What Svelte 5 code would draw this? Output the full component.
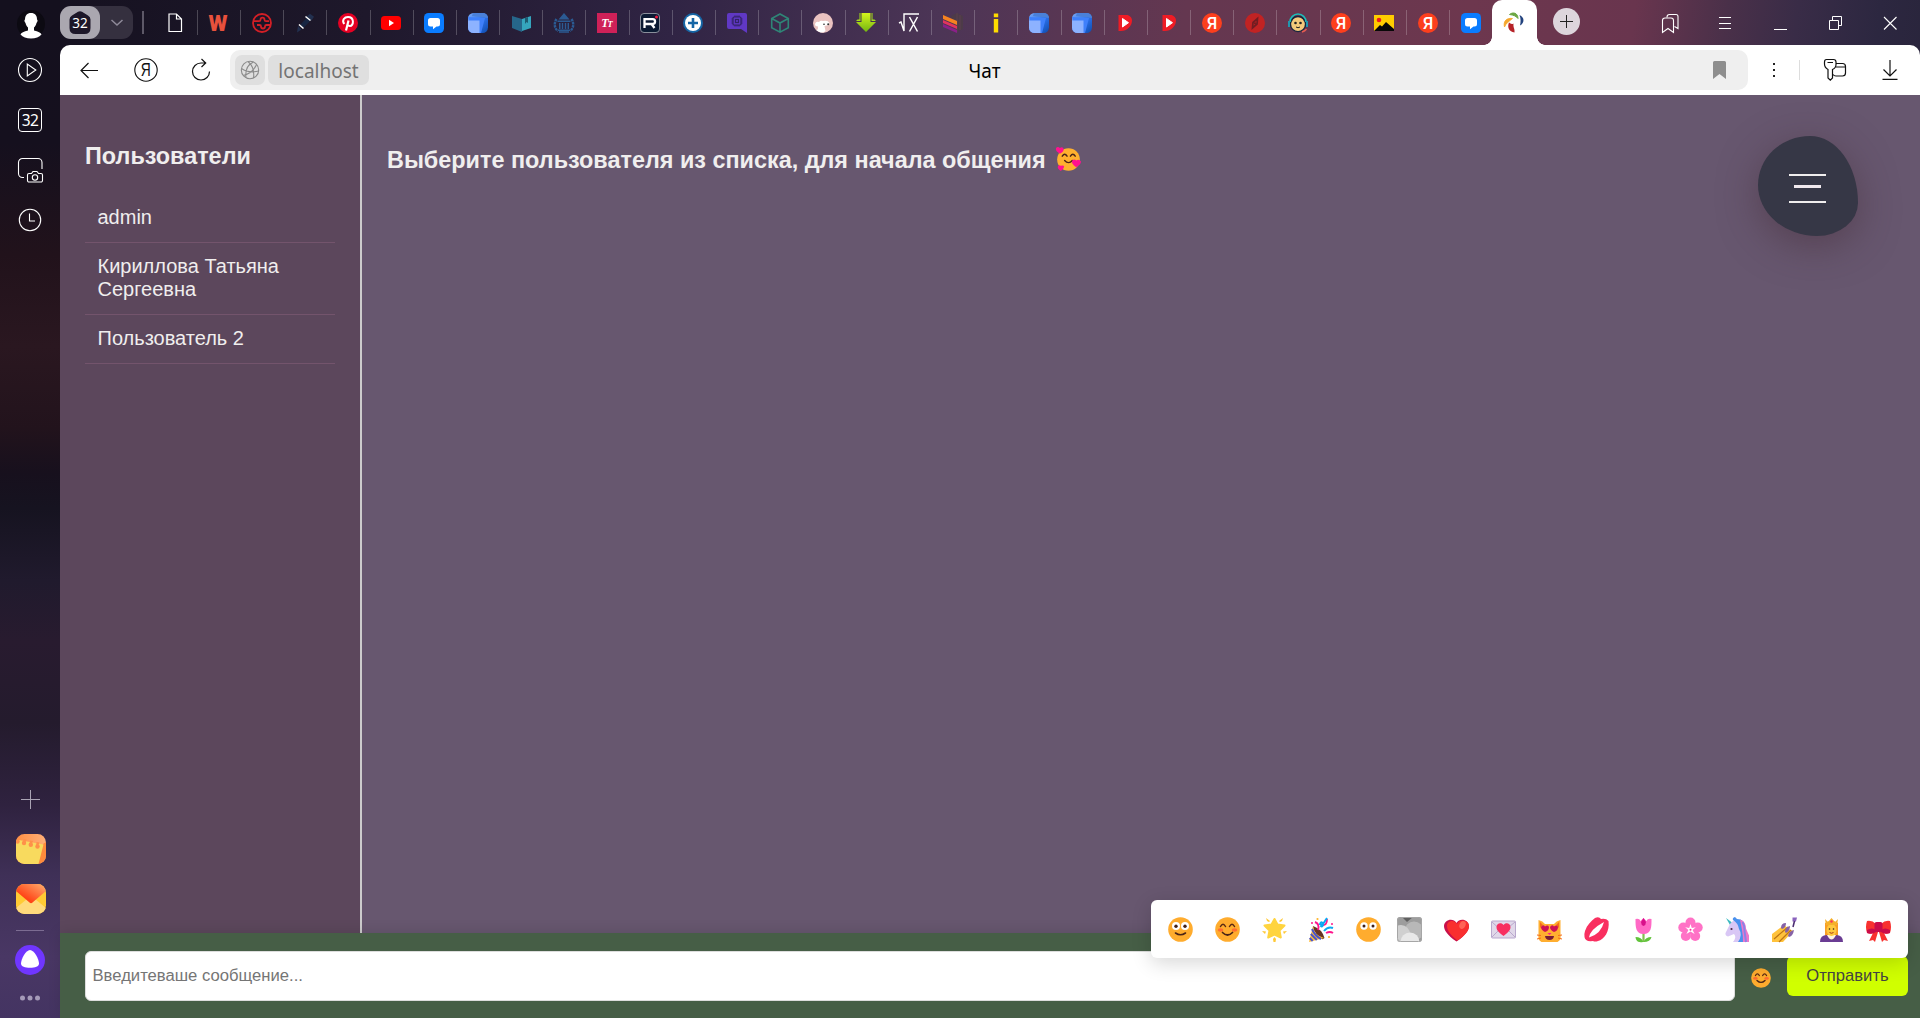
<script>
  const blueCard = `<defs><linearGradient id="bc" x1="0" y1="0" x2="1" y2="1"><stop offset="0" stop-color="#7aa9f2"/><stop offset=".5" stop-color="#2f74f0"/><stop offset="1" stop-color="#0d4bab"/></linearGradient></defs><rect width="20" height="20" rx="5.5" fill="url(#bc)"/><path d="M5 0h10a5 5 0 0 1 5 5L4 3z" fill="#4a80d8"/><path d="M0 4l17 1-4 15H5z" fill="#3f80fb"/><path d="M0 7.5h11.5V20H5.5A5.5 5.5 0 0 1 0 14.500z" fill="#8db2ff"/>`;
  const yandex = `<circle cx="10" cy="10" r="10" fill="#fc3f1d"/><text x="10" y="15.600" text-anchor="middle" font-family="Liberation Sans" font-weight="700" font-size="16" textLength="10" lengthAdjust="spacingAndGlyphs" fill="#fff">Я</text>`;
  const chat = `<rect width="20" height="20" rx="4.500" fill="#0a7cff"/><path d="M6.500 5h7a2.500 2.500 0 0 1 2.500 2.500v3.500a2.500 2.500 0 0 1-2.500 2.500h-1L9 16.200v-2.700H6.500A2.500 2.500 0 0 1 4 11V7.500A2.500 2.500 0 0 1 6.500 5z" fill="#fff"/>`;
  const redPlay = `<path d="M3.500 2h8c3 0 5.500 2.500 5.500 5.500C17 13 12 18 6 18H3.500z" fill="#ee1c25"/><path d="M7.500 5.500l6 4.200-6 4.300z" fill="#fff" stroke="#fff" stroke-linejoin="round"/>`;

  const tabs = [
    `<path d="M4 1h7.500l5 5v12.500H4zM11.500 1v5h5" fill="none" stroke="#fff" stroke-width="1.200"/>`,
    `<text x="10" y="18" text-anchor="middle" font-family="Roboto" font-weight="900" font-size="22.500" textLength="19" lengthAdjust="spacingAndGlyphs" fill="#e8513c">W</text>`,
    `<circle cx="10" cy="10" r="9" fill="none" stroke="#d41f26" stroke-width="1.800"/><g fill="none" stroke="#d41f26" stroke-width="1.800"><path d="M2 8.200h5q1.500 0 1.500-1.500 0-2 2-2t2 2q0 1.500 1.500 1.500h3"/><path d="M18 12h-3.500q-1.500 0-1.500 1.500 0 2-2 2t-2-2q0-1.500-1.500-1.500H5"/></g>`,
    `<path d="M11.500 3.500L15 .8l4 3-2.500 3.700zM3 13l3.500 3.500L2 19.500z" fill="#22304f"/><path d="M5 12l7-7.500 3.500 3L8.500 15z" fill="#172542"/><path d="M10.500 3.500l5 4M4 11.500l4.500 4" stroke="#fff" stroke-width="1.500"/>`,
    `<circle cx="10" cy="10" r="10" fill="#e60023"/><path d="M8 17.500l2.500-10" stroke="#fff" stroke-width="2.200" fill="none"/><path d="M6.200 11C3.500 7 6.500 4 10 4c6.500 0 6 9 1.800 9-1 0-1.800-.5-2-1.200" stroke="#fff" stroke-width="2" fill="none"/>`,
    `<rect y="3" width="20" height="14" rx="3.500" fill="#f00"/><path d="M8 6.800v6.400l5-3.200z" fill="#fff"/>`,
    chat,
    blueCard,
    `<path d="M1 3l10 3v13L1 15z" fill="#26668a"/><path d="M11 6l9-3v12l-9 3z" fill="#35a5bd"/><path d="M14 5l3-1v6l-1.500-1-1.500 2z" fill="#1d5c72"/>`,
    `<path d="M10 0l5.500 6.500h-11zM3.500 7.500h13V9h-13zM5 10h1.500v6H5zm2.800 0h1.400v6H7.800zm3 0h1.400v6h-1.400zm2.800 0H15v6h-1.400zM4 16.500h12V18H4z" fill="#2b5a92"/><path d="M2.500 6C0 10 0 15 4 18M17.500 6c2.500 4 2.500 9-1.500 12" fill="none" stroke="#2b5a92" stroke-width="2.400" stroke-dasharray="2.500 .7"/><path d="M5 19h10" stroke="#2b5a92" stroke-width="1.500"/>`,
    `<rect width="20" height="20" fill="#cf2158"/><text x="10" y="13.500" text-anchor="middle" font-family="Liberation Serif" font-style="italic" font-weight="700" font-size="12" fill="#fff">T<tspan font-size="8.500" dx="-1">T</tspan></text>`,
    `<rect x=".5" y=".5" width="19" height="19" rx="3.500" fill="#0b1a33" stroke="#8a8f9b"/><path d="M4.500 15V6.200h8.300c3 0 3 4.800 0 4.800H5M11.500 11l3 4" fill="none" stroke="#fff" stroke-width="2.300"/><circle cx="16.500" cy="4" r="1.500" fill="#f21a3f"/>`,
    `<circle cx="10" cy="10" r="10" fill="#1565a5"/><circle cx="10" cy="10" r="8" fill="#fff"/><path d="M10 5v10M5 10h10" stroke="#1565a5" stroke-width="2.600"/>`,
    `<path d="M2 0h16a2 2 0 0 1 2 2v18l-6-4H2a2 2 0 0 1-2-2V2a2 2 0 0 1 2-2z" fill="#6038c4"/><g fill="none" stroke="#322268" stroke-width="1.200"><rect x="6" y="4" width="8" height="8" rx="1"/><rect x="8.500" y="6.500" width="3" height="3"/><path d="M8 2.500V4m2-1.500V4m2-1.500V4m-4 8v1.500m2-1.500v1.500m2-1.500v1.500M4.500 6H6m-1.500 2H6m-1.500 2H6m8-4h1.500M14 8h1.500M14 10h1.500"/></g>`,
    `<path d="M10 1l8.300 4.500v9.200L10 19.200l-8.300-4.500V5.500zM1.700 5.500L10 10l8.300-4.500M10 10v9" fill="none" stroke="#2f8577" stroke-width="1.600"/>`,
    `<circle cx="10" cy="10" r="10" fill="#e9c2c0"/><path d="M2 11q1-3 4-2 1.500-2 4-1 5-1 6.500 2l-1 2-4 1 1 5q-2 2-5 1.500l-4-2q2-2 1.500-4-3 0-3-2.500z" fill="#fff"/><circle cx="11" cy="11.300" r=".8" fill="#222"/><circle cx="15.200" cy="11.300" r="1" fill="#333"/>`,
    `<defs><linearGradient id="dg" x1="0" y1="0" x2="0" y2="1"><stop offset="0" stop-color="#d5f51c"/><stop offset="1" stop-color="#72b512"/></linearGradient></defs><path d="M5.500 0h9v9H20L10 19 0 9h5.500z" fill="url(#dg)"/><path d="M3.500 0h1v8H0l1.500-1.500h2zM16.500 0h-1v8H20l-1.500-1.500h-2z" fill="#a6df18"/>`,
    `<path d="M0 10l2-1 3 9V1h15" fill="none" stroke="#fff" stroke-width="1.400"/><path d="M10.500 4l8 14.500M18.500 4l-8 14.500" stroke="#fff" stroke-width="1.500"/>`,
    `<path d="M8 3l6-3 6 3v13l-6 3z" fill="#4d3b48"/><path d="M14 0v19M17 2v15" stroke="#5d414f"/><path d="M0 2l14 6v4L0 6z" fill="#f78220"/><path d="M0 7l14 6v3L0 10z" fill="#e2335f"/><path d="M0 11l14 6v3L0 14z" fill="#8b2089"/>`,
    `<path d="M7.800.500h4.400v3.800H7.800zM7.800 6h4.400v13.500H7.800z" fill="#ffdc00"/>`,
    blueCard, blueCard, redPlay, redPlay, yandex,
    `<circle cx="10" cy="10" r="10" fill="#c12323"/><path d="M7.500 15l.5-5.500 4.500-4-.5 5.500z" fill="none" stroke="#701d22" stroke-width="1.700"/><circle cx="10" cy="10.200" r="1" fill="#701d22"/>`,
    `<circle cx="10" cy="11" r="8.300" fill="#18263f"/><circle cx="10" cy="11" r="6.900" fill="#f5ca7b"/><path d="M2 9a8 8 0 0 1 16 0" fill="none" stroke="#19c0bb" stroke-width="1.600"/><path d="M3.300 8.500a7 7 0 0 1 13.400 0" stroke="#18263f" stroke-width="1.200" fill="none"/><path d="M1 8v6M19 8v6" stroke="#2196b0" stroke-width="2"/><circle cx="7.500" cy="10" r="1.300" fill="#222"/><circle cx="12.500" cy="10" r="1.300" fill="#222"/><path d="M8 14q2 1.500 4 0" stroke="#222" fill="none"/><path d="M14 19q3-1 4.500-3" stroke="#e65b50" stroke-width="1.500" fill="none"/>`,
    yandex,
    `<path d="M0 2h20v16H0z" fill="#ffcc00"/><circle cx="5" cy="7" r="2.300" fill="#f01c1c"/><path d="M0 18l6-6 2 1.500 4-4.500 8 7v2z" fill="#080808"/>`,
    yandex,
    chat,
    `<path d="M5.500 1.500C9-1.500 14 0 14 5.500 12 3 9.500 2 5.500 1.500z" fill="#6ca744" stroke="#6ca744"/><path d="M15.500 2c5 2 5.500 8 .5 10.500.8-3 1-7-.5-10.500z" fill="#22427e"/><path d="M8.500 5.500C2 4.500-1 9 .5 14 2 10 5 8.500 8.500 5.500z" fill="#f5a72d" stroke="#f5a72d" stroke-width=".8"/><path d="M5 9.500c-2 4.500 0 9.500 5.500 10 .5-4-1.500-4.500-1-9-1.500 1-3 .5-4.500-1z" fill="#b62328"/>`
  ];

  const smile = `<circle cx="12.500" cy="12.500" r="12.300" fill="#ffac2e"/><path d="M5.500 9.500q2.500-4.500 5 0M14.500 9.500q2.500-4.500 5 0" fill="none" stroke="#5b2a14" stroke-width="1.500" stroke-linecap="round"/><ellipse cx="5.500" cy="13" rx="2.800" ry="1.700" fill="#ff6d32"/><ellipse cx="19.500" cy="13" rx="2.800" ry="1.700" fill="#ff6d32"/><path d="M7.500 15.500q5 5 10 0" fill="none" stroke="#4b2417" stroke-width="1.700" stroke-linecap="round"/>`;

  const emojis = [
    { name: 'wide eyes', art: `<circle cx="12.500" cy="12.500" r="12.300" fill="#ffac2e"/><circle cx="8" cy="9" r="4" fill="#fff"/><circle cx="17" cy="9" r="4" fill="#fff"/><circle cx="8" cy="9.200" r="1.700" fill="#402019"/><circle cx="17" cy="9.200" r="1.700" fill="#402019"/><path d="M7.500 16q5 3.500 10 0" fill="none" stroke="#4b2417" stroke-width="1.600" stroke-linecap="round"/>` },
    { name: 'smile', art: smile },
    { name: 'star', art: `<path d="M12.500 2l3 5.500 7 1-5 5 1.300 7-6.300-3-6.300 3 1.300-7-5-5 7-1z" fill="#ffd43f" stroke="#ffd43f" stroke-width="2" stroke-linejoin="round"/><path d="M4 1l4 3-1 1-2-1zm17 0l-4 3 1 1 2-1zM0 14l4 .5-1 2.500zm25 0l-4 .5 1 2.500zM11 22l1.500-2 1.500 2-.5 3h-2z" fill="#ffc936"/>` },
    { name: 'party', art: `<path d="M4 9Q13 12 15.500 21 13 24 9 19 4 14 4 9z" fill="#653525"/><path d="M4 9q1 9 11 12L0 25z" fill="#ffbd39"/><path d="M3 12q3 7 9 10M1.800 17q3 3 6 6M.700 21l3 3" fill="none" stroke="#4c55c8" stroke-width="2"/><path d="M9 13q2-6-3-8M17 16q4-2 7 0M13 8q5 1 5-6" fill="none" stroke="#ff168d" stroke-width="1.900"/><path d="M11 8c0-4 4-3 3 0s-4 1 0-1l4-6M15 14q4-5 9-3" fill="none" stroke="#0baaf2" stroke-width="2"/><circle cx="8.500" cy="2" r="1.100" fill="#ffb52b"/><circle cx="20" cy="20" r="1.100" fill="#ffb52b"/><circle cx="3" cy="6" r="1" fill="#ff168d"/><circle cx="23" cy="7" r="1" fill="#ff168d"/>` },
    { name: 'no mouth', art: `<circle cx="12.500" cy="12.500" r="12.300" fill="#ffac2e"/><circle cx="8" cy="9" r="3.700" fill="#fff"/><circle cx="17" cy="9" r="3.700" fill="#fff"/><circle cx="8" cy="9" r="1.500" fill="#402019"/><circle cx="17" cy="9" r="1.500" fill="#402019"/>` },
    { name: 'fog', tile: true, art: `<clipPath id="fogc"><rect width="25" height="25" rx="3"/></clipPath><g clip-path="url(#fogc)"><rect width="25" height="25" fill="#9d9d9d"/><path d="M5 0h11l-6 5z" fill="#606060"/><circle cx="17" cy="14" r="9.500" fill="#b8b8b8"/><circle cx="4" cy="17" r="9" fill="#d0d0d0"/><circle cx="13" cy="25" r="9.500" fill="#e8e8e8"/></g><rect x=".5" y=".5" width="24" height="24" rx="3" fill="none" stroke="#a6a6a6"/>` },
    { name: 'heart', art: `<path d="M12.500 24.500C3 18 0 13 0 9c0-6 9-9 12.500-3C16 0 25 3 25 9c0 4-3 9-12.500 15.500z" fill="#c8104a"/><path d="M13.500 23.500C6 18 3 13 3 9c0-5 7-7 10-2 3-6 12-4 12 2 0 4-3 9-11.500 14.500z" fill="#f92f2f"/><ellipse cx="18.500" cy="8" rx="3" ry="4" transform="rotate(25 18.500 8)" fill="#ff6357"/>` },
    { name: 'love letter', art: `<rect x=".5" y="4" width="24" height="17" rx="1" fill="#e0d8e9" stroke="#b9a8cd"/><path d="M1 5l11 10L24 5M1 20l8-8M24 20l-8-8" fill="none" stroke="#b9a8cd"/><path d="M12.500 19C7 15 5.500 12.500 5.500 10c0-4 5-5 7-2 2-3 7-2 7 2 0 2.500-1.500 5-7 9z" fill="#f82f60"/>` },
    { name: 'heart-eyed cat', art: `<path d="M1.500 3Q6 4 8 7h9q2-3 6.500-4v15q1 5-3 7h-16q-4-2-3-7z" fill="#ffae30"/><path d="M3 5l3 3-3 3zM22 5l-3 3 3 3z" fill="#f56c19"/><path d="M8 15q-4-2-4-5 2-3 4-.500 3-2 4 .5 0 4-4 5zM17 15q-4-2-4-5 2-3 4-.500 3-2 4 .5 0 4-4 5z" fill="#cf1053"/><path d="M10.500 16h4l-2 2z" fill="#ff1b90"/><path d="M8 19h9q-.5 4-4.500 4T8 19z" fill="#7b1d35"/><path d="M0 18l4 .5M0 22l4-1M25 18l-4 .5M25 22l-4-1" stroke="#f56c19"/>` },
    { name: 'kiss', art: `<path d="M1 14C3 8 7 4 11 1q4-2 6 1 5-1 7.500 2C26 14 20 23 14 24q-3 1-5 0-8 1-8.500-4-.5-3 .5-6z" fill="#f92f60"/><path d="M5 20.500q1-8 15-15.500-3 12-15 15.500z" fill="#fff"/>` },
    { name: 'tulip', art: `<path d="M12.500 25V15" stroke="#83bf4f" stroke-width="2.200"/><path d="M12 25C6 26 5 23 4.500 20q6 0 8 5 2-5 8-5-1 5-8 5z" fill="#62c33b"/><path d="M4.500 2q4-1 5 2l3-3 3 3q1-3 5-2c0 8 0 15-8 15S4.500 10 4.500 2z" fill="#ff69c5"/><path d="M12.500 1l2.500 4q0 3-2.500 4-2.500-1-2.500-4z" fill="#d8108b"/>` },
    { name: 'blossom', art: `<g fill="#ff72c6"><circle cx="12.500" cy="5.500" r="5"/><circle cx="19.700" cy="10.500" r="5"/><circle cx="17.200" cy="19" r="5"/><circle cx="7.800" cy="19" r="5"/><circle cx="5.300" cy="10.500" r="5"/><circle cx="12.500" cy="12.500" r="5"/></g><path d="M12.500 7l1.300 4 4-.8-3.200 2.800 2 4-4.100-2.500L8.400 17l2-4-3.200-2.800 4 .8z" fill="#fff"/><circle cx="12.500" cy="12.800" r="1" fill="#f92f9b"/>` },
    { name: 'unicorn', art: `<path d="M1 1l6 4.500L5 8z" fill="#39b9c0"/><path d="M5 7q4-5 9-4 6 5 4 22H8q4-5 1-8l-6 2.500q-3-1-2.500-3.500z" fill="#d9c7f5"/><path d="M8 3q-1-2 2-3l2 2q8 0 8 9 0 8 2 14h-9q5-7 1-13-1-6-6-9z" fill="#4a91ee"/><path d="M15 2.500q6 2 6 9l3 7v6.500h-6q0-7-1-12z" fill="#ee77cb"/><path d="M17.500 5q2.500 4 2 9l1.500 11" stroke="#8c82e6" stroke-width="2" fill="none"/><circle cx="6.500" cy="12" r="1.100" fill="#4a2845"/>` },
    { name: 'nail polish', art: `<path d="M0 17L12 8l5 4 4 2-10 11H0z" fill="#ffc23b"/><path d="M2 22l14-12M7 25l12-12" stroke="#be7513" stroke-width="1.200"/><path d="M9 11q0-5 5-5 0 5-4 6zM13 15q0-5 5-6 0 5-4 7zM16 19q1-5 6-6-1 6-5 7z" fill="#8662a6"/><path d="M20.500.500l4.500 0-1 4h-3.500z" fill="#8a63bd"/><path d="M22.500 4l-1.500 6" stroke="#4d2d72" stroke-width="1.500"/>` },
    { name: 'princess', art: `<path d="M6 6q6-4 13 0v15H6z" fill="#f99d25"/><path d="M1 25q0-7 7-7l4.500 4 4.500-4q7 0 7 7z" fill="#6a3c93"/><path d="M8 18q4.500 9 9 0z" fill="#fff3df"/><ellipse cx="12.500" cy="13" rx="5" ry="6" fill="#ffc83d"/><path d="M6 2l3 3 3.500-4L16 5l3-3-1 6H7z" fill="#f5b02a"/><circle cx="12.500" cy="4.500" r="1.200" fill="#f92f60"/><circle cx="10.500" cy="12" r=".8" fill="#37251a"/><circle cx="14.500" cy="12" r=".8" fill="#37251a"/><path d="M10.500 15.500q2 1.500 4 0" stroke="#a8371c" fill="none"/>` },
    { name: 'ribbon', art: `<path d="M8 14L3 24l4-1 2 2 3-10zM17 14l5 10-4-1-2 2-3-10z" fill="#f8312f"/><path d="M1 4q5-1 9 3v8q-4 3-9 1-2-6 0-12zM24 4q-5-1-9 3v8q4 3 9 1 2-6 0-12z" fill="#f8312f"/><path d="M1 13q5-3 9 0v2q-4 3-9 1zM24 13q-5-3-9 0v2q4 3 9 1z" fill="#ca0b4a"/><rect x="8.500" y="5" width="8" height="10" rx="2" fill="#ca0b4a"/>` }
  ];

  const users = ['admin', 'Кириллова Татьяна Сергеевна', 'Пользователь 2'];
  let message = $state('');
</script>

<div class="browser">
  <aside class="rail">
    <div class="slot avatar">
      <svg width="28" height="32" viewBox="0 0 28 32"><circle cx="14" cy="16" r="14" fill="#0c0a12"/><path d="M14 6c4 0 6 2.500 6 6.500 1 .5.600 2.500-.5 3.500-.5 2-1.500 3.500-2.500 4.500v3c4 1 7 2 7.500 4q-3.500 4-10.500 4T3.500 27.500c.5-2 3.500-3 7.500-4v-3c-1-1-2-2.500-2.500-4.500-1.100-1-1.500-3-.500-3.500C8 8.500 10 6 14 6z" transform="translate(0 -1)" fill="#fff"/></svg>
    </div>
    <div class="slot"><svg width="26" height="26" viewBox="0 0 26 26" fill="none" stroke="#fff" stroke-width="1.100"><circle cx="13" cy="13" r="11.500"/><path d="M10.300 7v12l8.500-6z"/></svg></div>
    <div class="slot"><span class="count">32</span></div>
    <div class="slot"><svg width="26" height="26" viewBox="0 0 26 26" fill="none" stroke="#fff" stroke-width="1.100"><path d="M7 20.500H5.500a4 4 0 0 1-4-4v-11a4 4 0 0 1 4-4h15.500a4 4 0 0 1 4 4V12"/><path d="M12 16.500h2.500l1.500-2h4l1.500 2H24a1.500 1.500 0 0 1 1.500 1.500v5.500a1.500 1.500 0 0 1-1.500 1.500H12a1.500 1.500 0 0 1-1.500-1.500V18a1.500 1.500 0 0 1 1.500-1.500z"/><circle cx="18" cy="20.500" r="2.700"/></svg></div>
    <div class="slot"><svg width="26" height="26" viewBox="0 0 26 26" fill="none" stroke="#fff" stroke-width="1.100"><circle cx="13" cy="13" r="10.700"/><path d="M12.500 6.500v7.500H18"/></svg></div>
    <div class="grow"></div>
    <div class="slot"><svg width="20" height="20" viewBox="0 0 20 20" stroke="#aaa4b4"><path d="M10.500 1v19M1 10.500h19"/></svg></div>
    <div class="slot app"><svg width="30" height="30" viewBox="0 0 30 30"><defs><linearGradient id="nt" x1="0" y1="0" x2="1" y2="0"><stop stop-color="#ff8e43"/><stop offset="1" stop-color="#ffb078"/></linearGradient><clipPath id="rc"><rect width="30" height="30" rx="8.500"/></clipPath></defs><g clip-path="url(#rc)"><path d="M0 0h30v30H0z" fill="url(#nt)"/><path d="M27 10l3-2v22h-8z" fill="#ff8b3c"/><path d="M0 5.500L27.500 10.500 22.500 30H0z" fill="#f8da5e"/><g fill="#ff9149"><circle cx="1.500" cy="7.500" r="2.200"/><circle cx="8" cy="9" r="2.200"/><circle cx="14.800" cy="10.800" r="2.200"/><circle cx="21.500" cy="12.500" r="2.200"/><path d="M0 3h3.500L2 8H0zM7.500 5l3 .5L9 9H7zM14 6.500l3 .5-1.500 4h-2zM20.500 8l3 .5-1.500 4h-2z"/></g></g></svg></div>
    <div class="slot app"><svg width="30" height="30" viewBox="0 0 30 30"><defs><linearGradient id="ml" x1="0" y1="1" x2="1" y2="0"><stop offset=".3" stop-color="#ff4517"/><stop offset="1" stop-color="#ffb070"/></linearGradient></defs><g clip-path="url(#rc)"><path d="M0 0h30v30H0z" fill="#ffcb34"/><path d="M0 24l11-9h8l11 9v6H0z" fill="#ffda7c"/><path d="M0 0h30v7L16.500 18.500q-1.500 1.300-3 0L0 7z" fill="url(#ml)"/></g></svg></div>
    <div class="rule"></div>
    <div class="slot alice"><svg width="30" height="30" viewBox="0 0 30 30"><circle cx="15" cy="15" r="15" fill="#7036ff"/><path d="M15 5c4 0 9 9 9 13.500 0 3-4 4.300-9 4.300s-9-1.300-9-4.300C6 14 11 5 15 5z" fill="#fff"/></svg></div>
    <div class="slot dots"><svg width="20" height="6" viewBox="0 0 20 6" fill="#a59bb8"><circle cx="2.500" cy="3" r="2.500"/><circle cx="10" cy="3" r="2.500"/><circle cx="17.500" cy="3" r="2.500"/></svg></div>
  </aside>

  <div class="window">
    <header class="tabbar">
      <div class="group">
        <span class="home"><svg width="22" height="24" viewBox="0 0 22 24"><path d="M3 4.500l6-3.800q2-1 4 0l6 3.800q2.500 1.500 2.500 4V17q0 6-6 6h-9q-6 0-6-6V8.500q0-2.500 2.500-4z" fill="#1d1729"/><text x="11" y="17.300" text-anchor="middle" font-family="Noto Sans" font-size="14.500" textLength="15.500" lengthAdjust="spacingAndGlyphs" fill="#fff">32</text></svg></span>
        <svg class="chevron" width="14" height="10" viewBox="0 0 14 10" fill="none" stroke="#8f8a99" stroke-width="1.500"><path d="M1.500 2l5.500 5 5.500-5"/></svg>
      </div>
      <span class="bar"></span>
      <nav class="tabs">
        {#each tabs as art, i}
          <div class="tab" class:active={i === tabs.length - 1} class:plain={i >= tabs.length - 2}>
            <svg width="20" height="20" viewBox="0 0 20 20">{@html art}</svg>
          </div>
        {/each}
      </nav>
      <button class="add" aria-label="Новая вкладка"><svg width="13" height="13" viewBox="0 0 13 13" stroke="#222"><path d="M6.500 0v13M0 6.500h13"/></svg></button>
      <div class="controls">
        <svg width="20" height="22" viewBox="0 0 20 22" fill="none" stroke="#fff" stroke-width="1.100"><path d="M2.500 20.500V8.500Q2.500 6 5 6h6q2.500 0 2.500 2.500v12l-5.500-4z"/><path d="M7 5.500V5q0-2.500 2.500-2.500H16q2 0 2 2v12l-3.500-2"/></svg>
        <svg width="20" height="22" viewBox="0 0 20 22" stroke="#fff"><path d="M4 5.500h12M4 11.500h12M4 16.500h12"/></svg>
        <svg width="20" height="22" viewBox="0 0 20 22" stroke="#fff"><path d="M4 17.500h13"/></svg>
        <svg width="20" height="22" viewBox="0 0 20 22" fill="none" stroke="#fff"><path d="M4.500 8.500h9v9h-9zM7.500 8V4.500h9v9H14"/></svg>
        <svg width="20" height="22" viewBox="0 0 20 22" stroke="#fff" stroke-width="1.100"><path d="M4 5l12.500 12.500M16.500 5L4 17.500"/></svg>
      </div>
    </header>

    <div class="toolbar">
      <svg class="back" width="20" height="20" viewBox="0 0 20 20" fill="none" stroke="#111" stroke-width="1.200"><path d="M18 10.500H1M8.500 3L1 10.500 8.500 18"/></svg>
      <svg class="ya" width="24" height="24" viewBox="0 0 24 24"><circle cx="12" cy="12" r="11.200" fill="none" stroke="#111" stroke-width="1.100"/><text x="11.700" y="18.300" text-anchor="middle" font-family="Liberation Sans" font-size="18" textLength="10" lengthAdjust="spacingAndGlyphs" fill="#111">Я</text></svg>
      <svg class="reload" width="20" height="22" viewBox="0 0 20 22" fill="none" stroke="#111" stroke-width="1.200"><path d="M18.500 12.500a8.500 8.500 0 1 1-8.500-8.500h4.500M10.500 0l4.200 4-4.200 4"/></svg>
      <div class="address">
        <span class="globe"><svg width="20" height="20" viewBox="0 0 20 20" fill="none" stroke="#8b8b8b" stroke-width="1.100"><circle cx="10" cy="10" r="8.700"/><path d="M1.500 8.500q7 5 17 2.500M13.500 2Q4.500 6 6 17.800M8 1.500q7 6 5.500 16.500M3.500 15.500Q13 13 16.500 4.500"/></svg></span>
        <span class="host">localhost</span>
        <span class="title">Чат</span>
        <svg class="mark" width="13" height="18" viewBox="0 0 13 18"><path d="M0 1.500Q0 0 1.500 0h10Q13 0 13 1.500V18l-6.500-5L0 18z" fill="#8e8e8e"/></svg>
      </div>
      <svg class="more" width="4" height="16" viewBox="0 0 4 16" fill="#222"><path d="M1 1h2v2H1zM1 7h2v2H1zM1 13h2v2H1z"/></svg>
      <span class="split"></span>
      <svg class="key" width="24" height="24" viewBox="0 0 24 24" fill="none" stroke="#111" stroke-width="1.200"><path d="M3.500 1.500h7Q13 1.500 13 4v2.500Q13 10 9.500 11.500V20l-2.200 2.200L5 20v-8.500Q1.500 9.500 1.500 6V4Q1.500 1.500 3.500 1.500zM4.500 4.500h5.500"/><path d="M13 5.500h6.500q3 0 3 3V15q0 3-3 3H13q-2 0-3-1.500M13 9h9.500"/></svg>
      <svg class="down" width="16" height="20" viewBox="0 0 16 20" fill="none" stroke="#111" stroke-width="1.200"><path d="M8 0v15.500M1.500 9.500L8 16l6.500-6.500M.5 19.300h15"/></svg>
    </div>

    <div class="page">
      <section class="users">
        <h2>Пользователи</h2>
        <ul>
          {#each users as user}
            <li>{user}</li>
          {/each}
        </ul>
      </section>
      <main class="chat">
        <h1>Выберите пользователя из списка, для начала общения
          <svg class="love" width="25" height="25" viewBox="0 0 26 26"><circle cx="13" cy="13" r="11.800" fill="#ffb02e"/><path d="M6.500 9.500q2.500-4 5 0M15 9.500q2.500-4 5 0M9 14q4 4.500 8 0" fill="none" stroke="#4b2417" stroke-width="1.500" stroke-linecap="round"/><g fill="#ff128f"><path d="M4 7Q-1 4 0 1q2-2 4 0 3-2 4 1 0 3-4 5z"/><path d="M21 21q-6-4-4-7 2-2 4 0 3-2 5 1 0 3-5 6z"/><path d="M5 25q-4-3-3-5 1-2 3-.500 3-1 3.500 1Q8 23 5 25z"/></g></svg>
        </h1>
        <button class="blob" aria-label="Меню"><span></span><span class="short"></span><span></span></button>
      </main>
    </div>

    <footer class="composer">
      <input bind:value={message} placeholder="Введитеваше сообщение..." />
      <button class="emoji" aria-label="Эмодзи"><svg width="20" height="20" viewBox="0 0 25 25">{@html smile}</svg></button>
      <button class="send">Отправить</button>
      <div class="picker">
        {#each emojis as emoji}
          <span class:tile={emoji.tile} role="img" aria-label={emoji.name}><svg width="25" height="25" viewBox="0 0 25 25">{@html emoji.art}</svg></span>
        {/each}
      </div>
    </footer>
  </div>
</div>

<style>
  :global(body) { margin: 0; overflow: hidden; }
  .browser {
    display: grid;
    grid-template-columns: 60px 1fr;
    width: 100vw;
    height: 1018px;
    font-family: "Liberation Sans", Arial, sans-serif;
    background: linear-gradient(97deg, #14101e 0, #1e182b 18%, #302444 33%, #4c3556 46%, #643750 58%, #6d374e 72%, #69354e 80%, #4a3049 84.500%, #392c47 88%, #2c2740 92%, #242033 100%);
  }
  .browser * { box-sizing: border-box; }
  svg { display: block; flex: none; overflow: visible; }
  button { border: 0; padding: 0; font: inherit; }

  .rail {
    display: flex;
    flex-direction: column;
    align-items: center;
    background: linear-gradient(180deg, #14101e 0, #15101e 14%, #21121b 25%, #2a1720 34%, #22131c 42%, #17101d 46.500%, #161320 50%, #201a2d 57%, #281b2f 63%, #241b2d 71%, #2f223f 79%, #3f3057 86%, #493764 94%, #443462 100%);
  }
  .slot { width: 60px; height: 50px; display: grid; place-items: center; flex: none; }
  .slot.avatar { height: 45px; padding: 2px 0 0 2px; }
  .slot.app { padding-left: 2px; }
  .count {
    width: 24px; height: 24px;
    border: 1px solid #fff; border-radius: 4px;
    color: #fff; font: 15.500px/23px "Noto Sans", sans-serif; text-align: center; letter-spacing: -.7px;
  }
  .grow { flex: 1; }
  .rule { width: 28px; height: 1px; margin-top: 6px; background: #7c6c92; }
  .slot.alice { height: 59px; }
  .slot.alice svg { margin-bottom: 1px; }
  .slot.dots { height: 17px; margin-bottom: 12px; margin-top: -1px; }

  .window { display: grid; grid-template-rows: 45px 50px 838px 85px; min-width: 0; }
  .tabbar { display: flex; align-items: center; }
  .group {
    display: flex; align-items: center;
    width: 73px; height: 33px; border-radius: 11px; background: #35303f;
  }
  .home { display: grid; place-items: center; width: 40px; height: 33px; border-radius: 11px; background: #aaa7b0; }
  .chevron { margin-left: 10px; }
  .bar { width: 2px; height: 23px; margin: 0 9.600px 0 9px; background: #5d5867; }
  .tabs { display: flex; height: 45px; }
  .tab { display: flex; align-items: center; justify-content: center; width: 43.190px; position: relative; padding-top: 1px; }
  .tab:not(.plain)::after {
    content: ""; position: absolute; right: -1px; top: 10px;
    width: 1px; height: 25px; background: rgba(255, 255, 255, .22);
  }
  .tab.active { width: 45px; background: #fff; border-radius: 10px 10px 0 0; margin-left: -.6px; }
  .tab.active::before, .tab.active::after {
    content: ""; position: absolute; bottom: 0; width: 8px; height: 8px; top: auto;
  }
  .tab.active::before { left: -8px; background: radial-gradient(circle at 0 0, transparent 7.500px, #fff 8px); }
  .tab.active::after { right: -8px; background: radial-gradient(circle at 100% 0, transparent 7.500px, #fff 8px); }
  .add {
    display: grid; place-items: center;
    width: 27px; height: 27px; margin-left: 16px; margin-top: -2px;
    border-radius: 50%; background: #ddd5dc;
  }
  .controls { display: flex; gap: 35px; margin-left: auto; padding-right: 20px; }

  .toolbar {
    display: flex; align-items: center;
    background: #fff; border-radius: 10px 10px 0 0;
  }
  .back { margin-left: 20px; }
  .ya { margin-left: 33.500px; }
  .reload { margin-left: 33px; }
  .address {
    display: flex; align-items: center;
    width: 1518px; height: 40px; margin-left: 19.500px; padding: 0 22px 0 5px;
    border-radius: 10px; background: #efefef;
    font-family: "Noto Sans", sans-serif; font-size: 19px;
  }
  .globe { display: grid; place-items: center; width: 30px; height: 30px; border-radius: 7px; background: #dfdfdf; }
  .host { width: 101px; height: 30px; margin-left: 3px; border-radius: 7px; background: #dfdfdf; color: #747474; text-align: center; line-height: 32px; }
  .title { flex: 1; padding: 1px 113px 0 0; text-align: center; color: #000; }
  .more { margin-left: 24px; }
  .split { width: 1px; height: 20px; margin-left: 23px; background: #ddd; }
  .key { margin-left: 23px; }
  .down { margin-left: 35px; }

  .page { display: grid; grid-template-columns: 302px 1fr; }
  .users { padding: 48px 25px 0; border-right: 2px solid #ccc; background: #5c475c; color: #f0eeee; }
  h1, h2 { margin: 0; font-weight: 700; color: #f0eeee; }
  h2 { font-size: 23.400px; line-height: 27px; }
  ul { margin: 23px 0 0; padding: 0; list-style: none; }
  li { padding: 12px 12.500px 13px; border-bottom: 1px solid #73546c; font-size: 20px; line-height: 23px; }
  li:first-child { padding-top: 12.500px; }
  .chat {
    display: flex; justify-content: space-between; align-items: flex-start;
    padding: 41px 62px 0 25px; background: #67576f;
  }
  h1 { display: flex; align-items: center; gap: 10px; margin-top: 11px; font-size: 23.400px; line-height: 27px; white-space: nowrap; }
  .love { margin-bottom: 2px; }
  .blob {
    display: flex; flex-direction: column; align-items: center;
    width: 100px; height: 100px; padding-top: 38px;
    border-radius: 52% 48% 41% 59% / 49% 67% 33% 51%;
    background: #363746; box-shadow: 0 10px 38px rgba(68, 44, 54, .5);
  }
  .blob span { width: 37px; height: 2px; background: #f0eeee; margin-left: -1px; }
  .blob .short { width: 27px; height: 3px; margin-top: 9px; margin-bottom: 13px; background: #f0e8ee; }

  .composer {
    display: flex; align-items: flex-start; position: relative;
    padding: 18px 12px 0 25px; background: #465e46;
    box-shadow: 0 -2px 12px rgba(0, 0, 0, .1);
  }
  input {
    width: 1650px; height: 50px; padding: 0 6.500px;
    border: 1px solid #ddd; border-radius: 6px; outline: 0;
    font: 16.650px "Liberation Sans", Arial, sans-serif; background: #fff;
  }
  input::placeholder { color: #757575; opacity: 1; }
  .emoji { margin: 17px 16px 0; background: none; }
  .send {
    width: 121px; height: 40px; margin-top: 5px;
    border-radius: 6px; background: #d0ff00; color: #444; font-size: 16.600px;
  }
  .picker {
    display: flex; align-items: center; position: absolute;
    right: 12px; bottom: 60px; width: 757px; height: 58px; padding: 1px 6px 0;
    border-radius: 6px; background: #fff; box-shadow: 0 5px 20px rgba(0, 0, 0, .16);
  }
  .picker span { width: 47px; display: grid; place-items: center; }
  .picker .tile { width: 41px; padding-right: 6px; }
</style>
